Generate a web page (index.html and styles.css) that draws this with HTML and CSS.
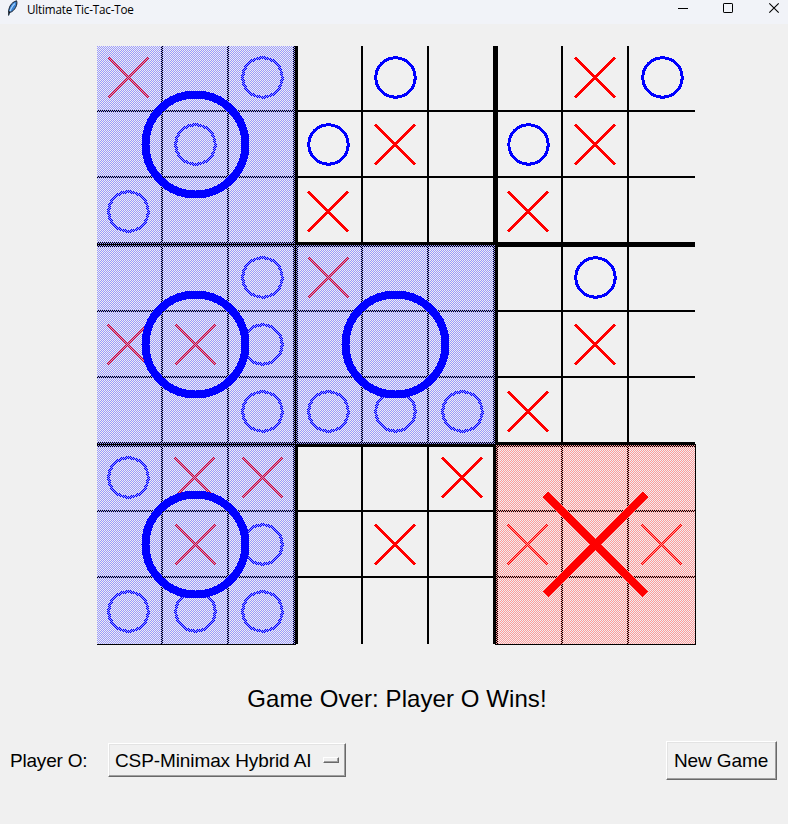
FILE: index.html
```html
<!DOCTYPE html>
<html lang="en">
<head>
<meta charset="utf-8">
<title>Ultimate Tic-Tac-Toe</title>
<link rel="stylesheet" href="styles.css">
</head>
<body>
<header class="titlebar">
  <svg class="feather" width="14" height="16" viewBox="0 0 14 16">
    <path d="M2.5 14.8C2.2 8 4.5 2.500 10.600.8C12 4.500 8.800 11 4 12.500Z" fill="#3b82d0" stroke="#17202e" stroke-width="1"/>
    <path d="M8.800 3.500C6 6 4 10 2.800 15.500" fill="none" stroke="#a8d4ff" stroke-width="1.200"/>
    <path d="M4 11L2.500 15.500" stroke="#111" stroke-width="1"/>
  </svg>
  <h1 class="title">Ultimate Tic-Tac-Toe</h1>
  <svg class="controls" width="104" height="16" viewBox="0 0 104 16">
    <path d="M2 8.500H12" stroke="#000"/>
    <rect x="47.500" y="3.500" width="9" height="9" rx=".6" fill="none" stroke="#000"/>
    <path d="M93.300 3.300L102.700 12.700M102.700 3.300L93.300 12.700" stroke="#000" stroke-width="1.100"/>
  </svg>
</header>
<main class="app">
  <svg id="board" class="board" width="599" height="599" viewBox="97 46 599 599" shape-rendering="crispEdges">
    <defs>
      <pattern id="stipple-o" width="2" height="2" patternUnits="userSpaceOnUse">
        <path d="M1 0h1v1h-1zM0 1h1v1h-1z" fill="#9999ff"/>
      </pattern>
      <pattern id="stipple-x" width="2" height="2" patternUnits="userSpaceOnUse">
        <path d="M1 0h1v1h-1zM0 1h1v1h-1z" fill="#ff9999"/>
      </pattern>
    </defs>
  </svg>
  <p class="status">Game Over: Player O Wins!</p>
  <div class="toolbar">
    <span class="label">Player O:</span>
    <button class="raised select"><span>CSP-Minimax Hybrid AI</span><i class="indicator"></i></button>
    <button class="raised new-game"><span>New Game</span></button>
  </div>
</main>
<script src="board.js"></script>
</body>
</html>
```
FILE: styles.css
```css
* { box-sizing: border-box; }
body {
  margin: 0;
  width: 788px;
  height: 824px;
  overflow: hidden;
  background: #f0f0f0;
  color: #000;
  font-family: "Liberation Sans", Arial, sans-serif;
}
.titlebar {
  display: flex;
  align-items: flex-start;
  height: 24px;
  padding-left: 6px;
  background: #f1f3f8;
}
.feather { margin-right: 7px; }
.title {
  flex: 1;
  margin: 0;
  font: 11.7px/18px "Open Sans", "Noto Sans", sans-serif;
  letter-spacing: -0.2px;
}
.controls { margin-right: 8px; }
.app { display: flex; flex-direction: column; }
.board { display: block; margin: 22px 0 0 97px; }
.thin { stroke: #000; stroke-width: 2; }
.thick { stroke: #000; stroke-width: 5; }
.mark { fill: none; }
.mark.o { stroke-width: 3; }
.mark.x { stroke-width: 2.8; }
.big { fill: none; stroke-width: 8; }
.o { stroke: #00f; }
.x { stroke: #f00; }
.outline { fill: none; stroke: #000; stroke-width: 1; }
.status {
  margin: 39px 0 0 6px;
  height: 30px;
  font-size: 24px;
  line-height: 30px;
  letter-spacing: 0.08px;
  text-align: center;
}
.toolbar {
  display: flex;
  align-items: center;
  height: 40px;
  margin-top: 26px;
  padding: 0 11px 0 10px;
  font-size: 19px;
}
.label { width: 98px; padding-top: 2px; white-space: nowrap; letter-spacing: -0.2px; }
.raised {
  display: flex;
  align-items: center;
  padding: 0 6px;
  border: 1px solid;
  border-color: #fff #696969 #696969 #fff;
  box-shadow: inset -1px -1px #a0a0a0, inset 1px 1px #e3e3e3;
  background: #f0f0f0;
  color: #000;
  font: inherit;
  letter-spacing: -0.1px;
  white-space: nowrap;
}
.raised span { padding-top: 2px; }
.select { width: 238px; height: 34px; justify-content: space-between; }
.indicator {
  width: 16px;
  height: 6px;
  border: 1px solid;
  border-color: #fff #696969 #696969 #fff;
  box-shadow: inset -1px -1px #a0a0a0;
}
.new-game {
  width: 111px;
  height: 39px;
  margin-left: auto;
  padding: 0 7px 0 6px;
  justify-content: center;
  letter-spacing: -0.1px;
}
```
FILE: board.js
```js
const svg = document.getElementById('board');
const NS = 'http://www.w3.org/2000/svg';
const LEFT = 95, TOP = 44, SIZE = 200;
const cellCenter = [33.5, 100.5, 167.5];

// Nine cells per board, row by row, and the board's winner.
const boards = [
  ['X.O.O.O..', 'O'], ['.O.OX.X..', ''], ['.XOOX.X..', ''],
  ['..OXXO..O', 'O'], ['X.....OOO', 'O'], ['.O..X.X..', ''],
  ['OXX.XOOOO', 'O'], ['..X.X....', ''], ['...XXX...', 'X']
];

function add(tag, attrs) {
  const el = document.createElementNS(NS, tag);
  for (const k in attrs) el.setAttribute(k, attrs[k]);
  svg.appendChild(el);
}
function line(x1, y1, x2, y2, cls) {
  add('line', { x1, y1, x2, y2, class: cls });
}
function mark(who, cx, cy, r, cls) {
  if (who === 'O') add('circle', { cx, cy, r, class: cls + ' o' });
  if (who === 'X') add('path', {
    d: `M${cx - r} ${cy - r}L${cx + r} ${cy + r}M${cx + r} ${cy - r}L${cx - r} ${cy + r}`,
    class: cls + ' x'
  });
}

for (let b = 0; b < 3; b++) {
  for (const o of [67, 133]) {
    const x = LEFT + b * SIZE + o, y = TOP + b * SIZE + o;
    line(x, TOP, x, 644, 'thin');
    line(LEFT, y, 695, y, 'thin');
  }
}
for (const k of [1, 2]) {
  const x = LEFT + k * SIZE + .5, y = TOP + k * SIZE + .5;
  line(x, TOP, x, 644, 'thick');
  line(LEFT, y, 695, y, 'thick');
}
boards.forEach(([cells], i) => {
  const x = LEFT + (i % 3) * SIZE, y = TOP + Math.floor(i / 3) * SIZE;
  [...cells].forEach((who, c) => {
    const cx = x + cellCenter[c % 3], cy = y + cellCenter[Math.floor(c / 3)];
    if (who === 'O') mark(who, cx, cy, 19.7, 'mark');
    else mark(who, cx - .5, cy, 20, 'mark');
  });
});

// Decided boards get a stippled tint over their cells, then the winner's mark.
boards.forEach(([, winner], i) => {
  if (!winner) return;
  const x = LEFT + (i % 3) * SIZE, y = TOP + Math.floor(i / 3) * SIZE;
  add('rect', { x, y, width: SIZE, height: SIZE, fill: `url(#stipple-${winner.toLowerCase()})` });
  add('rect', { x: x + .5, y: y + .5, width: SIZE, height: SIZE, class: 'outline' });
});
boards.forEach(([, winner], i) => {
  if (!winner) return;
  const x = LEFT + (i % 3) * SIZE, y = TOP + Math.floor(i / 3) * SIZE;
  mark(winner, x + 100.5, y + 100.5, 50, 'big');
});
```
